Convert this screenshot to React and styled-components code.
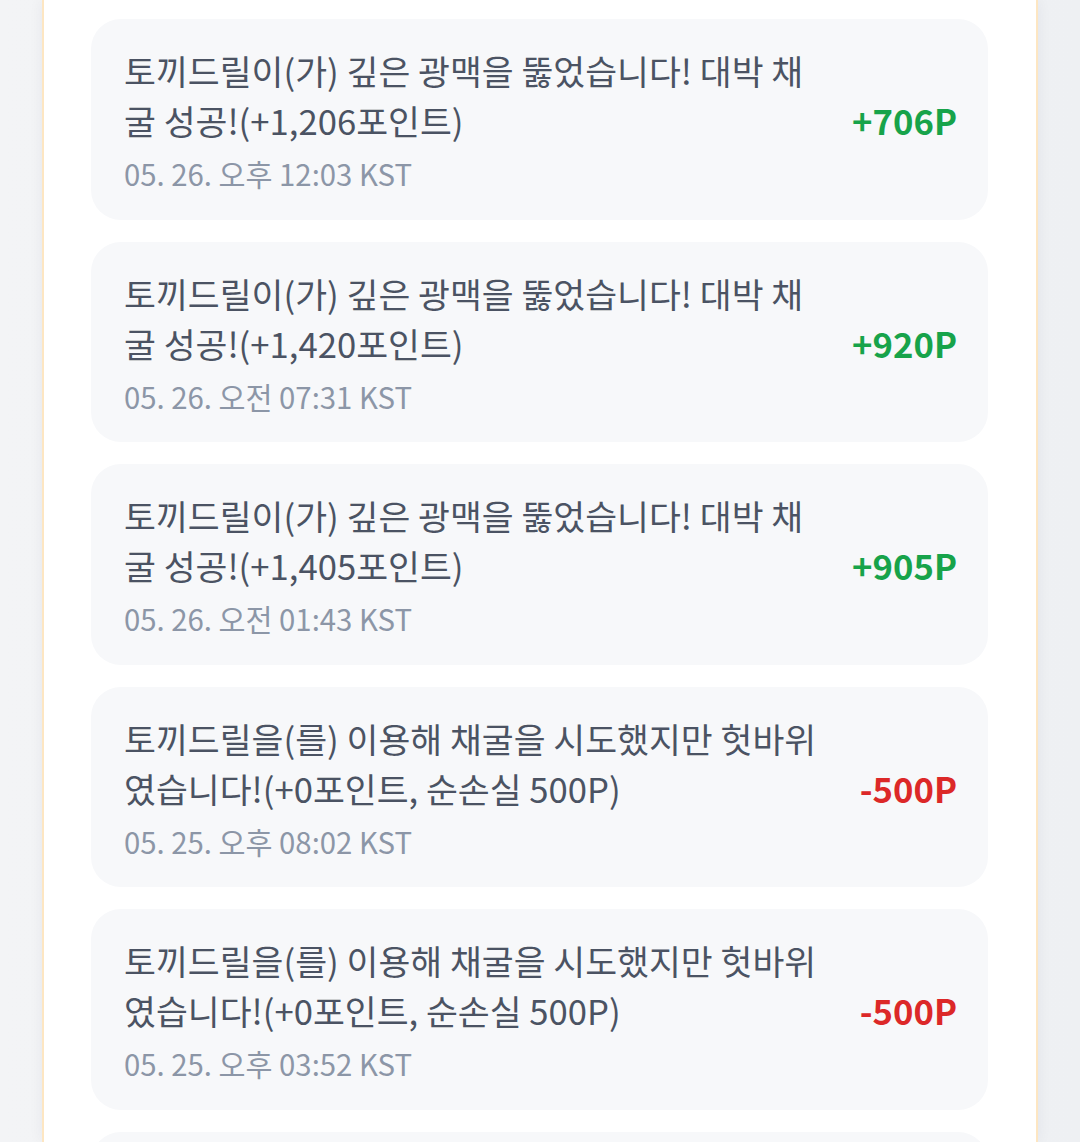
import React from "react";
import styled, { createGlobalStyle } from "styled-components";

const Global = createGlobalStyle`
  html, body { margin: 0; padding: 0; }
  body {
    background: linear-gradient(90deg, #f3f4f6 0%, #eef0f3 100%);
    font-family: "Noto Sans CJK KR", "Noto Sans", sans-serif;
    overflow: hidden;
  }
`;

const Page = styled.div`
  display: flex;
  justify-content: center;
  padding: 0 42px;
  height: 1142px;
`;

const Panel = styled.section`
  flex: 1;
  background: #ffffff;
  border-left: 2px solid #fde6c2;
  border-right: 2px solid #fde6c2;
  box-shadow: 0 0 14px rgba(30, 40, 70, 0.06);
  padding: 19px 48px 0 47px;
  display: flex;
  flex-direction: column;
  gap: 22px;
  overflow: hidden;
`;

const Card = styled.article`
  flex-shrink: 0;
  display: flex;
  align-items: center;
  gap: 32px;
  background: #f7f8fa;
  border-radius: 30px;
  padding: 26px 31px 24.5px 33px;
`;

const Body = styled.div`
  flex: 1;
  min-width: 0;
`;

const Message = styled.p`
  margin: 0;
  font-size: 34.67px;
  line-height: 50px;
  color: #4b5363;
`;

const Time = styled.div`
  margin-top: 6px;
  font-size: 29.33px;
  line-height: 44px;
  color: #8c96a7;
`;

const Amount = styled.div`
  flex-shrink: 0;
  font-size: 34.67px;
  font-weight: 700;
  color: ${(p) => (p.$negative ? "#dc2828" : "#17a34a")};
`;

const items = [
  { msg: "토끼드릴이(가) 깊은 광맥을 뚫었습니다! 대박 채굴 성공!(+1,206포인트)", time: "05. 26. 오후 12:03 KST", amount: "+706P" },
  { msg: "토끼드릴이(가) 깊은 광맥을 뚫었습니다! 대박 채굴 성공!(+1,420포인트)", time: "05. 26. 오전 07:31 KST", amount: "+920P" },
  { msg: "토끼드릴이(가) 깊은 광맥을 뚫었습니다! 대박 채굴 성공!(+1,405포인트)", time: "05. 26. 오전 01:43 KST", amount: "+905P" },
  { msg: "토끼드릴을(를) 이용해 채굴을 시도했지만 헛바위였습니다!(+0포인트, 순손실 500P)", time: "05. 25. 오후 08:02 KST", amount: "-500P" },
  { msg: "토끼드릴을(를) 이용해 채굴을 시도했지만 헛바위였습니다!(+0포인트, 순손실 500P)", time: "05. 25. 오후 03:52 KST", amount: "-500P" },
  { msg: "토끼드릴을(를) 이용해 채굴을 시도했지만 헛바위였습니다!(+0포인트, 순손실 500P)", time: "05. 25. 오전 10:12 KST", amount: "-500P" },
];

export default function App() {
  return (
    <>
      <Global />
      <Page>
        <Panel>
          {items.map((it, i) => (
            <Card key={i}>
              <Body>
                <Message>{it.msg}</Message>
                <Time>{it.time}</Time>
              </Body>
              <Amount $negative={it.amount.startsWith("-")}>{it.amount}</Amount>
            </Card>
          ))}
        </Panel>
      </Page>
    </>
  );
}
